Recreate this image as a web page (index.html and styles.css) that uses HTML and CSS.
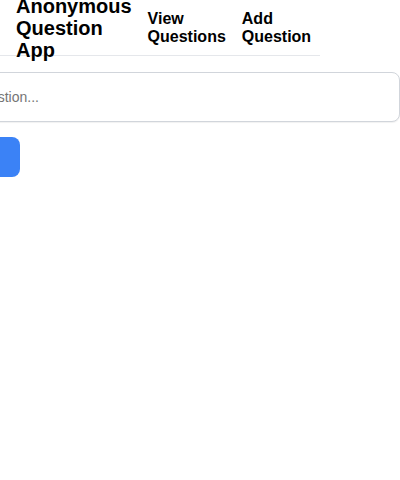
FILE: index.html
```html
<!DOCTYPE html>
<html lang="en">
<head>
<meta charset="utf-8">
<title>Anonymous Question App</title>
<link rel="stylesheet" href="styles.css">
</head>
<body>
<header class="topbar">
  <h1 class="brand">Anonymous Question App</h1>
  <nav class="nav">
    <a class="nav-link" href="#">View Questions</a>
    <a class="nav-link" href="#">Add Question</a>
  </nav>
</header>
<main class="page">
  <form class="ask-form">
    <input class="ask-input" type="text" placeholder="Type your question...">
    <button class="ask-button" type="button">Submit</button>
  </form>
</main>
</body>
</html>
```

FILE: styles.css
```css
html, body {
  margin: 0;
  padding: 0;
  background: #ffffff;
}

body {
  font-family: "Liberation Sans", Arial, Helvetica, sans-serif;
  color: #000000;
  overflow: hidden;
}

.topbar {
  display: flex;
  align-items: center;
  gap: 16px;
  width: 320px;
  height: 56px;
  padding: 0 0 0 16px;
  box-sizing: border-box;
  border-bottom: 1px solid #e5e7eb;
}

.brand {
  margin: 0;
  font-size: 20px;
  font-weight: 700;
  line-height: 22px;
  width: min-content;
  flex: none;
}

.nav {
  display: flex;
  gap: 16px;
  align-items: center;
}

.nav-link {
  font-size: 16px;
  font-weight: 700;
  color: #000000;
  text-decoration: none;
  width: min-content;
}

.page {
  display: flex;
  justify-content: flex-end;
  padding-top: 16px;
}

.ask-form {
  flex: none;
  width: 504px;
  display: flex;
  flex-direction: column;
  align-items: flex-start;
  gap: 15px;
}

.ask-input {
  width: 100%;
  box-sizing: border-box;
  height: 50px;
  padding: 0 12px;
  font-family: "Liberation Sans", Arial, sans-serif;
  font-size: 14px;
  border: 1px solid #d1d5db;
  border-radius: 8px;
  box-shadow: 0 1px 1px rgba(0, 0, 0, 0.06);
  outline: none;
}

.ask-input::placeholder {
  color: #757575;
}

.ask-button {
  width: 124px;
  height: 40px;
  border: none;
  border-radius: 8px;
  background: #3b82f6;
  color: #ffffff;
  font-family: "Liberation Sans", Arial, sans-serif;
  font-size: 14px;
}
```
